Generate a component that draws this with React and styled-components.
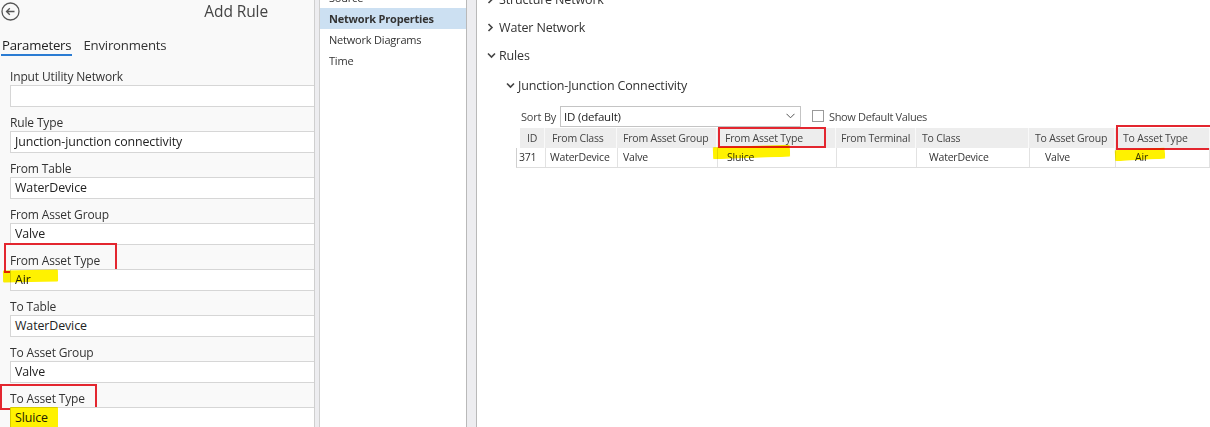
import React from "react";
import styled, { createGlobalStyle } from "styled-components";

const GlobalStyle = createGlobalStyle`
  html, body {
    margin: 0;
    padding: 0;
    background: #ffffff;
  }
  body {
    font-family: "Open Sans", "Noto Sans", "Liberation Sans", sans-serif;
    color: #333;
  }
`;

const Screen = styled.div`
  display: flex;
  width: 1210px;
  height: 427px;
  overflow: hidden;
  background: #fff;
`;

/* ---------- geoprocessing pane ---------- */

const ToolPane = styled.div`
  width: 314px;
  flex: none;
  overflow: hidden;
  background: #f9f9f9;
  display: flex;
  flex-direction: column;
`;

const ToolHeader = styled.div`
  display: flex;
  align-items: center;
  height: 25px;
  padding: 0 0 0 1px;
`;

const BackButton = styled.button`
  width: 19px;
  height: 19px;
  padding: 0;
  border: 0;
  background: none;
  display: flex;
  color: #555;
`;

const ToolTitle = styled.div`
  margin-left: auto;
  margin-right: 46px;
  font-size: 15.5px;
  color: #444;
  letter-spacing: -0.1px;
`;

const Tabs = styled.div`
  display: flex;
  gap: 10px;
  margin-top: 14px;
  padding-left: 1px;
`;

const Tab = styled.div`
  font-size: 13.2px;
  line-height: 18px;
  padding: 0 1px 0 1px;
  color: ${(p) => (p.$active ? "#222" : "#333")};
  border-bottom: 2px solid ${(p) => (p.$active ? "#2b7cd3" : "transparent")};
  letter-spacing: -0.2px;
`;

const Fields = styled.div`
  display: flex;
  flex-direction: column;
  padding: 13px 0 0 10px;
`;

const Field = styled.div`
  display: flex;
  flex-direction: column;
  margin-bottom: 8px;
`;

const FieldLabel = styled.div`
  font-size: 12px;
  line-height: 16px;
  color: #333;
  letter-spacing: -0.15px;
`;

const FieldBox = styled.div`
  position: relative;
  height: 22px;
  box-sizing: border-box;
  margin-right: -10px;
  border: 1px solid #d6d6d6;
  background: #fff;
  font-size: 12.4px;
  line-height: 20px;
  padding-left: 4px;
  color: #222;
  letter-spacing: -0.1px;
`;

/* red outline drawn over a label or a column heading */
const Marked = styled.span`
  position: relative;
  display: ${(p) => (p.$block ? "block" : "inline-block")};
  &::after {
    content: "";
    position: absolute;
    top: ${(p) => p.$t}px;
    right: ${(p) => p.$r}px;
    bottom: ${(p) => p.$b}px;
    left: ${(p) => p.$l}px;
    border: 2px solid #e3262f;
    pointer-events: none;
  }
`;

/* yellow marker stroke laid over a value */
const Highlighter = styled.span`
  position: absolute;
  left: ${(p) => p.$x}px;
  top: ${(p) => p.$y}px;
  width: ${(p) => p.$w}px;
  height: ${(p) => p.$h}px;
  background: #fff200;
  mix-blend-mode: multiply;
  transform: rotate(${(p) => p.$rot || 0}deg);
  border-radius: 1px;
  pointer-events: none;
`;

const Splitter = styled.div`
  flex: none;
  width: ${(p) => p.$w}px;
  box-sizing: border-box;
  background: #ededf0;
  border-left: 1px solid ${(p) => p.$edge};
  border-right: 1px solid ${(p) => p.$edge};
`;

/* ---------- properties nav ---------- */

const NavPane = styled.div`
  width: 146px;
  flex: none;
  background: #fff;
  margin-top: -13px;
`;

const NavItem = styled.div`
  height: 21px;
  line-height: 21px;
  padding-left: 9px;
  font-size: 11px;
  color: #333;
  font-weight: ${(p) => (p.$active ? 700 : 400)};
  background: ${(p) => (p.$active ? "#cce0f2" : "transparent")};
  letter-spacing: -0.2px;
`;

/* ---------- network properties ---------- */

const PropsPane = styled.div`
  flex: 1;
  min-width: 0;
  background: #fff;
  padding-left: 10px;
  margin-top: -15px;
`;

const TreeRow = styled.div`
  display: flex;
  align-items: center;
  height: ${(p) => p.$h || 28}px;
  padding-left: ${(p) => p.$indent || 0}px;
  font-size: 12.5px;
  color: #333;
  letter-spacing: -0.15px;
`;

const Caret = styled.span`
  width: 12px;
  display: flex;
  justify-content: flex-start;
  color: #444;
`;

const SortBar = styled.div`
  display: flex;
  align-items: center;
  height: 22px;
  margin-top: 4px;
  padding-left: 34px;
  font-size: 11px;
  color: #444;
  letter-spacing: -0.2px;
`;

const SortLabel = styled.span`
  width: 39px;
`;

const Select = styled.div`
  width: 241px;
  height: 21px;
  box-sizing: border-box;
  border: 1px solid #c4c4c4;
  display: flex;
  align-items: center;
  justify-content: space-between;
  padding: 0 5px 0 3px;
  font-size: 11.5px;
  color: #222;
`;

const CheckBox = styled.span`
  width: 12px;
  height: 12px;
  box-sizing: border-box;
  border: 1px solid #9a9a9a;
  background: #fff;
  margin: 0 5px 0 11px;
`;

const DefaultsLabel = styled.span`
  letter-spacing: -0.35px;
`;

const Table = styled.div`
  margin-left: 29px;
  margin-top: 1px;
`;

const columns = "29px 72px 100px 119px 80px 113px 86px 1fr";

const HeadRow = styled.div`
  display: grid;
  grid-template-columns: ${columns};
  height: 20px;
  & > div:first-child {
    margin-left: 4px;
  }
`;

const HeadCell = styled.div`
  background: #ededed;
  border-right: 1px solid #f9f9f9;
  font-size: 10.5px;
  line-height: 20px;
  padding-left: ${(p) => p.$pad ?? 6}px;
  color: #444;
  white-space: nowrap;
  letter-spacing: -0.2px;
`;

const DataRow = styled.div`
  display: grid;
  grid-template-columns: ${columns};
  height: 19px;
  border-bottom: 1px solid #dedede;
  border-left: 1px solid #cfcfcf;
`;

const DataCell = styled.div`
  position: relative;
  border-right: 1px solid #e2e2e2;
  font-size: 10.5px;
  line-height: 19px;
  padding-left: ${(p) => p.$pad ?? 6}px;
  color: #333;
  white-space: nowrap;
  letter-spacing: -0.2px;
`;

const BackIcon = () => (
  <svg width="19" height="19" viewBox="0 0 19 19" fill="none">
    <circle cx="9.5" cy="9.5" r="8.5" stroke="currentColor" strokeWidth="1.3" />
    <path d="M13.5 9.5H5.5M8.8 6.2L5.5 9.5l3.3 3.3" stroke="currentColor" strokeWidth="1.3" />
  </svg>
);

const ChevronRight = () => (
  <svg width="7" height="9" viewBox="0 0 7 9">
    <path d="M1.5 1l3.5 3.5L1.5 8" fill="none" stroke="currentColor" strokeWidth="1.6" />
  </svg>
);

const ChevronDown = () => (
  <svg width="9" height="7" viewBox="0 0 9 7">
    <path d="M1 1.5l3.5 3.5L8 1.5" fill="none" stroke="currentColor" strokeWidth="1.6" />
  </svg>
);

const SelectArrow = () => (
  <svg width="9" height="6" viewBox="0 0 9 6">
    <path d="M0.5 0.8L4.5 4.8L8.5 0.8" fill="none" stroke="#555" strokeWidth="1" />
  </svg>
);

const params = [
  { label: "Input Utility Network", value: "" },
  { label: "Rule Type", value: "Junction-junction connectivity" },
  { label: "From Table", value: "WaterDevice" },
  { label: "From Asset Group", value: "Valve" },
  {
    label: "From Asset Type",
    value: "Air",
    mark: { t: -10, r: -17, b: -4, l: -6 },
    hl: { x: -8, y: 0, w: 55, h: 12, rot: -1 },
  },
  { label: "To Table", value: "WaterDevice" },
  { label: "To Asset Group", value: "Valve" },
  {
    label: "To Asset Type",
    value: "Sluice",
    mark: { t: -7, r: -12, b: -3, l: -10 },
    hl: { x: -1, y: -1, w: 48, h: 22, rot: 0 },
  },
];

const headers = [
  { text: "ID", pad: 7 },
  { text: "From Class", pad: 7 },
  { text: "From Asset Group", pad: 6 },
  { text: "From Asset Type", pad: 8, mark: { t: -1, r: 9, b: 0, l: -7 } },
  { text: "From Terminal", pad: 5 },
  { text: "To Class", pad: 6 },
  { text: "To Asset Group", pad: 6 },
  { text: "To Asset Type", pad: 8, mark: { t: -3, r: -6, b: -2, l: -7 } },
];

const rules = [
  [
    { text: "371", pad: 2 },
    { text: "WaterDevice", pad: 4 },
    { text: "Valve", pad: 5 },
    { text: "Sluice", pad: 9, hl: { x: -5, y: -2, w: 77, h: 12, rot: -2 } },
    { text: "" },
    { text: "WaterDevice", pad: 12 },
    { text: "Valve", pad: 15 },
    { text: "Air", pad: 19, hl: { x: -1, y: 1, w: 50, h: 11, rot: -3 } },
  ],
];

export default function App() {
  return (
    <>
      <GlobalStyle />
      <Screen>
        <ToolPane>
          <ToolHeader>
            <BackButton aria-label="Back">
              <BackIcon />
            </BackButton>
            <ToolTitle>Add Rule</ToolTitle>
          </ToolHeader>
          <Tabs>
            <Tab $active>Parameters</Tab>
            <Tab>Environments</Tab>
          </Tabs>
          <Fields>
            {params.map((f) => (
              <Field key={f.label}>
                <FieldLabel>
                  {f.mark ? (
                    <Marked $t={f.mark.t} $r={f.mark.r} $b={f.mark.b} $l={f.mark.l}>
                      {f.label}
                    </Marked>
                  ) : (
                    f.label
                  )}
                </FieldLabel>
                <FieldBox>
                  {f.hl && (
                    <Highlighter $x={f.hl.x} $y={f.hl.y} $w={f.hl.w} $h={f.hl.h} $rot={f.hl.rot} />
                  )}
                  {f.value}
                </FieldBox>
              </Field>
            ))}
          </Fields>
        </ToolPane>

        <Splitter $w={6} $edge="#cfcfcf" />

        <NavPane>
          <NavItem>Source</NavItem>
          <NavItem $active>Network Properties</NavItem>
          <NavItem>Network Diagrams</NavItem>
          <NavItem>Time</NavItem>
        </NavPane>

        <Splitter $w={11} $edge="#b9b9b9" />

        <PropsPane>
          <TreeRow>
            <Caret>
              <ChevronRight />
            </Caret>
            Structure Network
          </TreeRow>
          <TreeRow>
            <Caret>
              <ChevronRight />
            </Caret>
            Water Network
          </TreeRow>
          <TreeRow>
            <Caret>
              <ChevronDown />
            </Caret>
            Rules
          </TreeRow>
          <TreeRow $indent={19} $h={32}>
            <Caret>
              <ChevronDown />
            </Caret>
            Junction-Junction Connectivity
          </TreeRow>

          <SortBar>
            <SortLabel>Sort By</SortLabel>
            <Select>
              <span>ID (default)</span>
              <SelectArrow />
            </Select>
            <CheckBox />
            <DefaultsLabel>Show Default Values</DefaultsLabel>
          </SortBar>

          <Table>
            <HeadRow>
              {headers.map((h) => (
                <HeadCell key={h.text} $pad={h.pad}>
                  {h.mark ? (
                    <Marked $block $t={h.mark.t} $r={h.mark.r} $b={h.mark.b} $l={h.mark.l}>
                      {h.text}
                    </Marked>
                  ) : (
                    h.text
                  )}
                </HeadCell>
              ))}
            </HeadRow>
            {rules.map((row, i) => (
              <DataRow key={i}>
                {row.map((c, j) => (
                  <DataCell key={j} $pad={c.pad}>
                    {c.hl && (
                      <Highlighter $x={c.hl.x} $y={c.hl.y} $w={c.hl.w} $h={c.hl.h} $rot={c.hl.rot} />
                    )}
                    {c.text}
                  </DataCell>
                ))}
              </DataRow>
            ))}
          </Table>
        </PropsPane>
      </Screen>
    </>
  );
}
